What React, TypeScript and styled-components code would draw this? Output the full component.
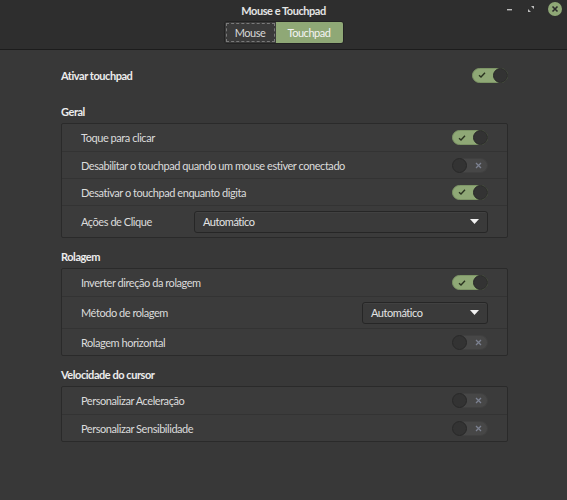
import styled, { createGlobalStyle } from "styled-components";

const GlobalStyle = createGlobalStyle`
  html, body {
    margin: 0;
    padding: 0;
    background: #383838;
  }
  * {
    box-sizing: border-box;
  }
`;

const Switch = ({ on }: { on: boolean }) => (
  <Track $on={on}>
    {on ? (
      <svg width="8" height="8" viewBox="0 0 8 8">
        <path d="M1 4.2 L3 6 L7 1.8" stroke="#2a3320" strokeWidth="1.4" fill="none" />
      </svg>
    ) : null}
    <Knob />
    {!on ? (
      <svg width="7" height="7" viewBox="0 0 7 7">
        <path d="M1 1 L6 6 M6 1 L1 6" stroke="#7c8190" strokeWidth="1.3" />
      </svg>
    ) : null}
  </Track>
);

const Combo = ({ value, width }: { value: string; width?: number }) => (
  <ComboBox $width={width}>
    <span>{value}</span>
    <svg width="9" height="5" viewBox="0 0 9 5">
      <path d="M0 0 H9 L4.5 5 Z" fill="#f2f2f2" />
    </svg>
  </ComboBox>
);

const WindowButtons = () => (
  <Controls>
    <svg width="8" height="8" viewBox="0 0 8 8">
      <rect x="1" y="4" width="5" height="1.4" fill="#bdbdbd" />
    </svg>
    <svg width="8" height="8" viewBox="0 0 8 8">
      <path d="M4 1 H7 V4 Z M1 4 V7 H4 Z" fill="#bdbdbd" />
    </svg>
    <CloseDot>
      <svg width="8" height="8" viewBox="0 0 8 8">
        <path d="M1.5 1.5 L6.5 6.5 M6.5 1.5 L1.5 6.5" stroke="#2b2b2b" strokeWidth="1.6" />
      </svg>
    </CloseDot>
  </Controls>
);

export default function App() {
  return (
    <>
      <GlobalStyle />
      <Window>
        <Header>
          <TitleRow>
            <Title>Mouse e Touchpad</Title>
            <WindowButtons />
          </TitleRow>
          <Tabs>
            <Tab $focused>Mouse</Tab>
            <Tab $active>Touchpad</Tab>
          </Tabs>
        </Header>
        <Content>
          <TopRow>
            <Strong>Ativar touchpad</Strong>
            <Switch on />
          </TopRow>

          <Section>
            <SectionTitle>Geral</SectionTitle>
            <Frame>
              <Row>
                <Label>Toque para clicar</Label>
                <Switch on />
              </Row>
              <Row>
                <Label>Desabilitar o touchpad quando um mouse estiver conectado</Label>
                <Switch on={false} />
              </Row>
              <Row>
                <Label>Desativar o touchpad enquanto digita</Label>
                <Switch on />
              </Row>
              <Row $h={32}>
                <Label>Ações de Clique</Label>
                <Combo value="Automático" width={294} />
              </Row>
            </Frame>
          </Section>

          <Section>
            <SectionTitle>Rolagem</SectionTitle>
            <Frame>
              <Row>
                <Label>Inverter direção da rolagem</Label>
                <Switch on />
              </Row>
              <Row $h={32}>
                <Label>Método de rolagem</Label>
                <Combo value="Automático" width={126} />
              </Row>
              <Row>
                <Label>Rolagem horizontal</Label>
                <Switch on={false} />
              </Row>
            </Frame>
          </Section>

          <Section>
            <SectionTitle>Velocidade do cursor</SectionTitle>
            <Frame>
              <Row>
                <Label>Personalizar Aceleração</Label>
                <Switch on={false} />
              </Row>
              <Row>
                <Label>Personalizar Sensibilidade</Label>
                <Switch on={false} />
              </Row>
            </Frame>
          </Section>
        </Content>
      </Window>
    </>
  );
}

const Window = styled.div`
  width: 567px;
  height: 500px;
  display: flex;
  flex-direction: column;
  background: #383838;
  font-family: Lato, "Noto Sans", sans-serif;
  font-size: 11px;
  letter-spacing: -0.45px;
  color: #dedede;
`;

const Header = styled.div`
  height: 50px;
  background: #2e2e2e;
  border-bottom: 1px solid #1c1c1c;
  display: flex;
  flex-direction: column;
  align-items: center;
`;

const TitleRow = styled.div`
  position: relative;
  width: 100%;
  height: 21px;
  display: flex;
  align-items: center;
  justify-content: center;
`;

const Title = styled.div`
  font-weight: 700;
  color: #e4e4e4;
`;

const Controls = styled.div`
  position: absolute;
  right: 5px;
  top: 2px;
  display: flex;
  align-items: center;
  gap: 13px;
`;

const CloseDot = styled.div`
  width: 14px;
  height: 14px;
  border-radius: 50%;
  background: #8fa876;
  display: flex;
  align-items: center;
  justify-content: center;
`;

const Tabs = styled.div`
  display: flex;
  height: 23px;
  border: 1px solid #232323;
  border-radius: 3px;
  overflow: hidden;
`;

const Tab = styled.div<{ $active?: boolean; $focused?: boolean }>`
  display: flex;
  align-items: center;
  justify-content: center;
  color: ${(p) => (p.$active ? "#f4f4f4" : "#d8d8d8")};
  background: ${(p) => (p.$active ? "#8fa876" : "#3a3a3a")};
  outline: ${(p) => (p.$focused ? "1px dashed #7a7a7a" : "none")};
  outline-offset: -2px;
  width: ${(p) => (p.$active ? "67px" : "51px")};
`;

const Content = styled.div`
  padding: 11px 59px 0 61px;
  display: flex;
  flex-direction: column;
  gap: 6px;
`;

const TopRow = styled.div`
  height: 28px;
  display: flex;
  align-items: center;
  justify-content: space-between;
  margin-bottom: 4px;
`;

const Strong = styled.div`
  font-weight: 700;
  color: #ececec;
`;

const Section = styled.div`
  display: flex;
  flex-direction: column;
`;

const SectionTitle = styled.div`
  height: 24px;
  display: flex;
  align-items: center;
  font-weight: 700;
  color: #ececec;
`;

const Frame = styled.div`
  background: #3b3b3b;
  border: 1px solid #2a2a2a;
  border-radius: 2px;
  display: flex;
  flex-direction: column;
`;

const Row = styled.div<{ $h?: number }>`
  height: ${(p) => p.$h ?? 27}px;
  padding: 0 19px 0 19px;
  display: flex;
  align-items: center;
  justify-content: space-between;
  & + & {
    border-top: 1px solid #333333;
  }
`;

const Label = styled.div`
  color: #dcdcdc;
`;

const Track = styled.div<{ $on: boolean }>`
  width: 36px;
  height: 15px;
  border-radius: 8px;
  background: ${(p) => (p.$on ? "#8fa876" : "#474747")};
  border: 1px solid ${(p) => (p.$on ? "#7d9566" : "#404040")};
  display: flex;
  align-items: center;
  justify-content: space-between;
  padding: 0 0 0 ${(p) => (p.$on ? "5px" : "0")};
  padding-right: ${(p) => (p.$on ? "0" : "5px")};
`;

const Knob = styled.div`
  width: 15px;
  height: 15px;
  margin: -1px;
  border-radius: 50%;
  background: #333333;
  border: 1px solid #282828;
`;

const ComboBox = styled.div<{ $width?: number }>`
  width: ${(p) => p.$width ?? 126}px;
  height: 22px;
  background: #3a3a3a;
  border: 1px solid #262626;
  border-radius: 3px;
  box-shadow: inset 0 1px 0 rgba(255, 255, 255, 0.04);
  display: flex;
  align-items: center;
  justify-content: space-between;
  padding: 0 8px 0 8px;
  color: #e4e4e4;
`;
